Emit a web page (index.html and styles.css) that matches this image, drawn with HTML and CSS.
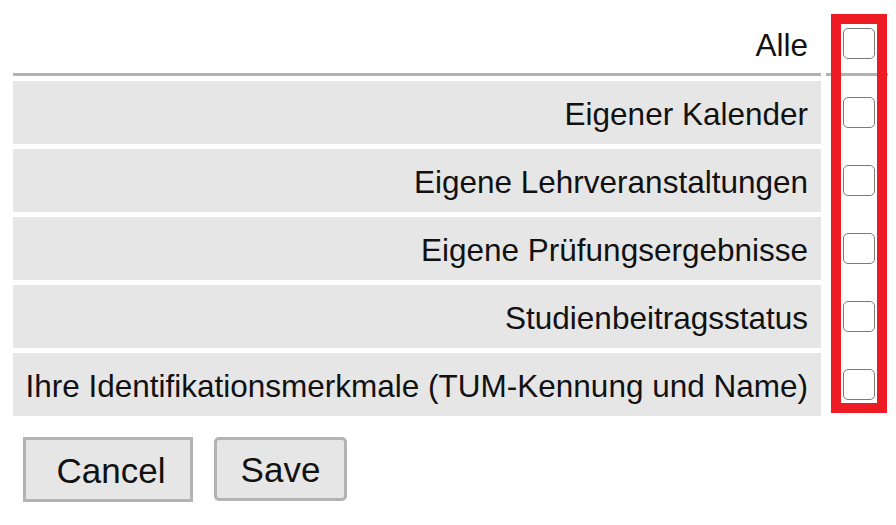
FILE: index.html
```html
<!DOCTYPE html>
<html lang="de">
<head>
<meta charset="utf-8">
<title>Freigaben</title>
<link rel="stylesheet" href="styles.css">
</head>
<body>
<div class="page">
  <div class="list">
    <div class="cell label head">Alle</div>
    <div class="cell check head"><span class="box"></span></div>

    <div class="cell label row">Eigener Kalender</div>
    <div class="cell check"><span class="box"></span></div>

    <div class="cell label row">Eigene Lehrveranstaltungen</div>
    <div class="cell check"><span class="box"></span></div>

    <div class="cell label row">Eigene Prüfungsergebnisse</div>
    <div class="cell check"><span class="box"></span></div>

    <div class="cell label row">Studienbeitragsstatus</div>
    <div class="cell check"><span class="box"></span></div>

    <div class="cell label row">Ihre Identifikationsmerkmale (TUM-Kennung und Name)</div>
    <div class="cell check"><span class="box"></span></div>
  </div>
  <div class="actions">
    <button class="btn btn-cancel" type="button">Cancel</button>
    <button class="btn btn-save" type="button">Save</button>
  </div>
  <div class="highlight"></div>
</div>
</body>
</html>
```

FILE: styles.css
```css
html, body {
  margin: 0;
  padding: 0;
  background: #ffffff;
}

body {
  font-family: "Liberation Sans", Arial, sans-serif;
  color: #111111;
}

.page {
  position: relative;
  width: 896px;
  height: 525px;
  padding: 8px;
  box-sizing: border-box;
}

.list {
  display: grid;
  grid-template-columns: 808px 62px;
  grid-auto-rows: 63px;
  gap: 5px;
  padding: 5px;
}

.cell {
  display: flex;
  align-items: center;
  box-sizing: border-box;
}

.label {
  justify-content: flex-end;
  padding-right: 13px;
  padding-top: 4px;
  font-size: 31.5px;
  white-space: nowrap;
}

.row.label {
  background: #e6e6e6;
}

.head {
  border-bottom: 3px solid #b3b3b3;
}

.check {
  justify-content: center;
  padding-left: 3px;
}

.box {
  display: block;
  width: 32px;
  height: 31px;
  box-sizing: border-box;
  border: 1.5px solid #7a7a7a;
  border-radius: 5px;
  background: #ffffff;
}

.actions {
  display: flex;
  gap: 21px;
  padding: 16px 0 0 15px;
}

.btn {
  font-family: "Liberation Sans", Arial, sans-serif;
  font-size: 35px;
  color: #111111;
  background: #e6e6e6;
  border: 3px solid #b3b3b3;
  box-sizing: border-box;
  height: 65px;
  padding: 2px 0 0 0;
}

.btn-cancel {
  width: 170px;
  padding-left: 6px;
  border-radius: 0;
}

.btn-save {
  width: 133px;
  height: 64px;
  border-radius: 5px;
}

.highlight {
  position: absolute;
  left: 831px;
  top: 14px;
  width: 56px;
  height: 399px;
  box-sizing: border-box;
  border: 10px solid #ed1c24;
  pointer-events: none;
}
```
